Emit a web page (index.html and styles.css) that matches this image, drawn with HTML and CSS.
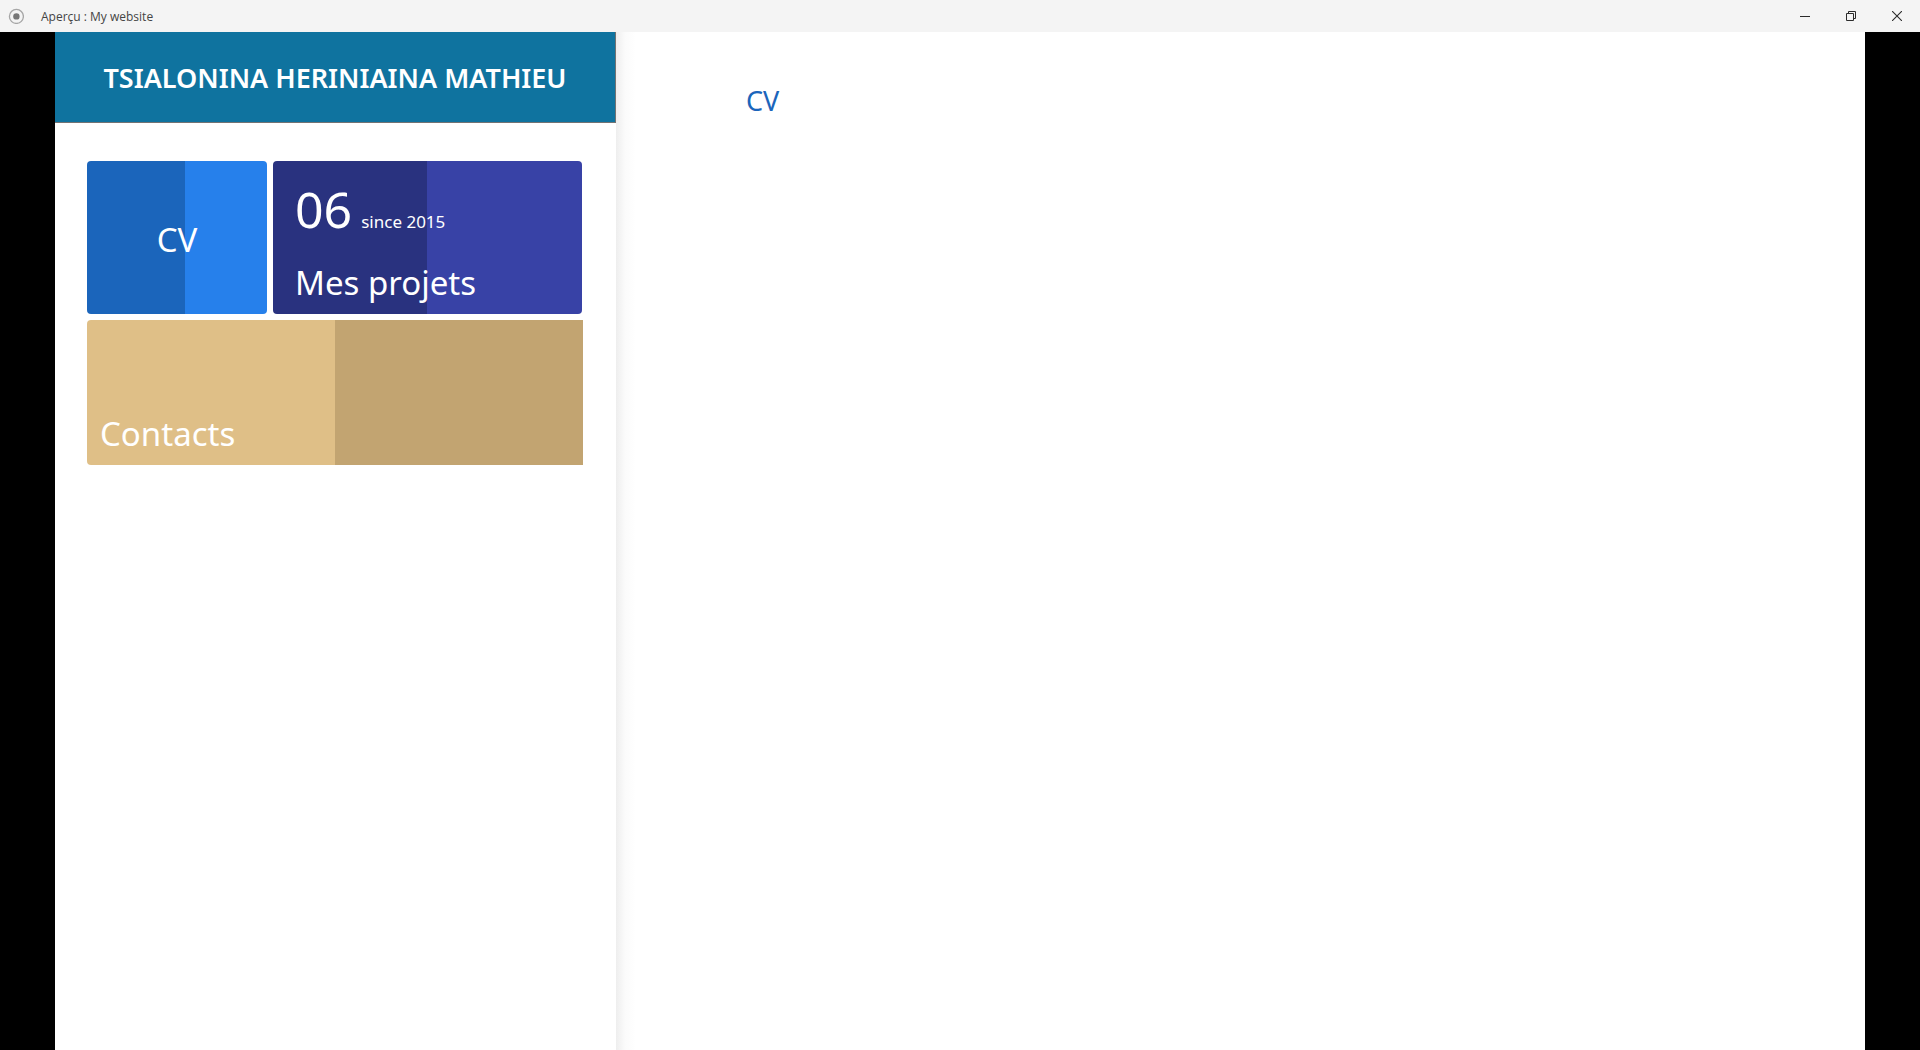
FILE: index.html
```html
<!DOCTYPE html>
<html lang="fr">
<head>
<meta charset="utf-8">
<title>Aperçu : My website</title>
<link rel="stylesheet" href="styles.css">
</head>
<body>
<header class="titlebar">
  <svg class="app-icon" width="16" height="16" viewBox="0 0 16 16" aria-hidden="true"><circle cx="8.400" cy="8.400" r="7" fill="none" stroke="#a6a6a6" stroke-width="1.3"/><circle cx="8.400" cy="8.400" r="3.2" fill="#777"/></svg>
  <span class="window-title">Aperçu : My website</span>
  <div class="window-controls">
    <button class="control" type="button" aria-label="Réduire"><svg width="10" height="10" viewBox="0 0 10 10"><path d="M0 5.500H10" stroke="#2b2b2b"/></svg></button>
    <button class="control" type="button" aria-label="Restaurer"><svg width="10" height="10" viewBox="0 0 10 10"><path d="M.5 2.500H7.500V9.500H.5ZM2.500 2.500V.5H9.500V7.500H7.500" fill="none" stroke="#2b2b2b"/></svg></button>
    <button class="control" type="button" aria-label="Fermer"><svg width="10" height="10" viewBox="0 0 10 10"><path d="M0 0L10 10M10 0L0 10" stroke="#2b2b2b" stroke-width="1.1"/></svg></button>
  </div>
</header>
<div class="stage">
  <aside class="sidebar">
    <h1 class="name">TSIALONINA HERINIAINA MATHIEU</h1>
    <nav class="tiles">
      <a class="tile tile-cv" href="#cv">CV</a>
      <a class="tile tile-projects" href="#projets">
        <span class="stats"><span class="count">06</span><span class="since">since 2015</span></span>
        <span>Mes projets</span>
      </a>
      <a class="tile tile-contacts" href="#contacts">Contacts</a>
    </nav>
  </aside>
  <main class="content">
    <h2 class="page-title" id="cv">CV</h2>
  </main>
</div>
</body>
</html>
```
FILE: styles.css
```css
* { box-sizing: border-box; }

body {
  margin: 0;
  min-height: 100vh;
  display: flex;
  flex-direction: column;
  background: #000;
  font-family: "Segoe UI", "Noto Sans", "Open Sans", sans-serif;
}

.titlebar {
  display: flex;
  align-items: center;
  height: 32px;
  padding-left: 8px;
  background: #f4f4f4;
}

.window-title {
  margin-left: 17px;
  padding-top: 2px;
  font-family: "Segoe UI", "Open Sans", sans-serif;
  font-size: 12px;
  line-height: 16px;
  color: #444;
}

.window-controls {
  display: flex;
  margin-left: auto;
}

.control {
  display: grid;
  place-items: center;
  width: 46px;
  height: 32px;
  padding: 0;
  border: 0;
  background: none;
}

.stage {
  flex: 1;
  display: flex;
  margin: 0 55px;
  background: #fff;
}

.sidebar {
  flex: 0 0 561px;
}

.name {
  margin: 0;
  padding: 27px 20px 25px;
  border: solid #737373;
  border-width: 0 1px 1px 0;
  background: #0f739f;
  color: #fff;
  font-size: 27px;
  line-height: 38px;
  font-weight: 600;
  text-align: center;
}

.tiles {
  display: grid;
  grid-template-columns: 180px 1fr;
  grid-template-rows: 153px 145px;
  gap: 6px;
  padding: 38px 33px 0 32px;
}

.tile {
  display: flex;
  border-radius: 4px;
  color: #fff;
  font-size: 33px;
  line-height: 46px;
  text-decoration: none;
}

.tile-cv {
  align-items: center;
  justify-content: center;
  padding-top: 4px;
  background: linear-gradient(90deg, #1b65bb 98px, #2680eb 98px);
}

.tile-projects {
  flex-direction: column;
  justify-content: space-between;
  padding: 14px 22px 8px;
  margin-right: 1px;
  background: linear-gradient(90deg, #29327f 50%, #3842a6 50%);
}

.stats {
  display: flex;
  align-items: baseline;
  gap: 9px;
}

.count {
  font-size: 50px;
  line-height: 68px;
}

.since {
  font-size: 17px;
}

.tile-contacts {
  grid-column: 1 / -1;
  align-items: flex-end;
  padding: 8px 13px;
  border-radius: 4px 0 0 4px;
  background: linear-gradient(90deg, #dfbf87 50%, #c2a471 50%);
}

.content {
  flex: 1;
  padding: 50px 130px;
  background: linear-gradient(90deg, #eee, #fbfbfb 9px, #fff 20px);
}

.page-title {
  margin: 0;
  color: #1b65bb;
  font-size: 27px;
  line-height: 38px;
  font-weight: 400;
}
```
